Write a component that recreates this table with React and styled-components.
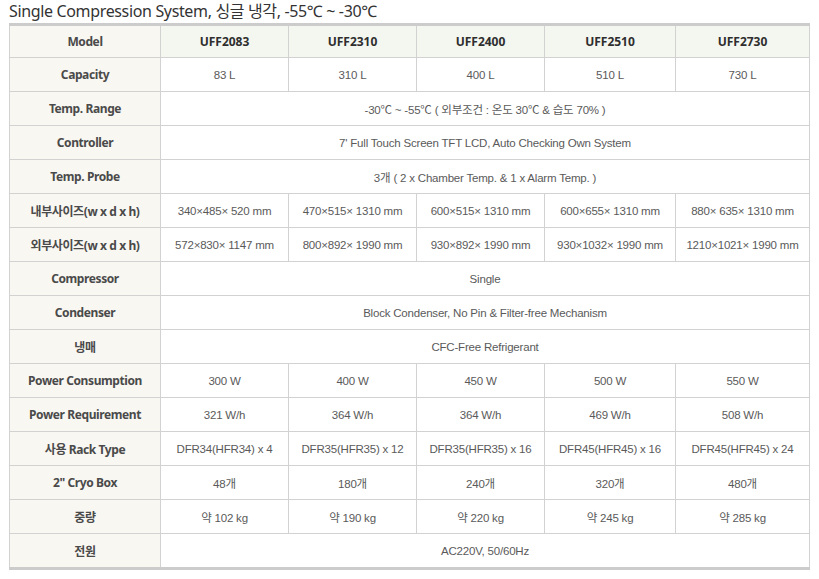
import styled, { createGlobalStyle } from "styled-components";

const GlobalStyle = createGlobalStyle`
  body {
    margin: 0;
    background: #fff;
  }
`;

const Page = styled.div`
  padding: 1px 10px 0 9px;
  width: 800px;
`;

const Title = styled.h3`
  margin: 0 0 2px 0;
  height: 20px;
  font-family: "Noto Sans", "Noto Sans CJK KR", sans-serif;
  font-size: 16px;
  line-height: 20px;
  font-weight: 400;
  color: #333;
  letter-spacing: -0.35px;
`;

const Table = styled.table`
  width: 800px;
  border-collapse: collapse;
  table-layout: fixed;
  border-top: 3px solid #cccccc;
  border-bottom: 3px solid #cccccc;
  font-family: "Liberation Sans", "Noto Sans CJK KR", sans-serif;
`;

const Col = styled.col`
  width: ${(p) => p.$w}px;
`;

const Label = styled.th`
  height: ${(p) => (p.$head ? 31 : 33)}px;
  padding: 0;
  background: #f9f7f2;
  border: 1px solid #d2d2d2;
  font-family: "Noto Sans", "Noto Sans CJK KR", sans-serif;
  font-size: 12px;
  font-weight: 700;
  color: #4a4a4a;
  text-align: center;
  letter-spacing: -0.4px;
`;

const Head = styled.th`
  padding: 0;
  background: #f4f6f0;
  border: 1px solid #d2d2d2;
  font-family: "Noto Sans", sans-serif;
  font-size: 12px;
  font-weight: 700;
  color: #2e2e2e;
  text-align: center;
`;

const Cell = styled.td`
  padding: 0;
  border: 1px solid #d2d2d2;
  font-size: 11.5px;
  color: #5a5a5a;
  text-align: center;
  letter-spacing: -0.2px;
`;

const widths = [151, 128, 128, 128, 131, 134];

const models = ["UFF2083", "UFF2310", "UFF2400", "UFF2510", "UFF2730"];

const rows = [
  ["Capacity", ["83 L", "310 L", "400 L", "510 L", "730 L"]],
  ["Temp. Range", "-30℃ ~ -55℃ ( 외부조건 : 온도 30℃ & 습도 70% )"],
  ["Controller", "7' Full Touch Screen TFT LCD, Auto Checking Own System"],
  ["Temp. Probe", "3개 ( 2 x Chamber Temp. & 1 x Alarm Temp. )"],
  ["내부사이즈(w x d x h)", ["340×485× 520 mm", "470×515× 1310 mm", "600×515× 1310 mm", "600×655× 1310 mm", "880× 635× 1310 mm"]],
  ["외부사이즈(w x d x h)", ["572×830× 1147 mm", "800×892× 1990 mm", "930×892× 1990 mm", "930×1032× 1990 mm", "1210×1021× 1990 mm"]],
  ["Compressor", "Single"],
  ["Condenser", "Block Condenser, No Pin & Filter-free Mechanism"],
  ["냉매", "CFC-Free Refrigerant"],
  ["Power Consumption", ["300 W", "400 W", "450 W", "500 W", "550 W"]],
  ["Power Requirement", ["321 W/h", "364 W/h", "364 W/h", "469 W/h", "508 W/h"]],
  ["사용 Rack Type", ["DFR34(HFR34) x 4", "DFR35(HFR35) x 12", "DFR35(HFR35) x 16", "DFR45(HFR45) x 16", "DFR45(HFR45) x 24"]],
  ["2\" Cryo Box", ["48개", "180개", "240개", "320개", "480개"]],
  ["중량", ["약 102 kg", "약 190 kg", "약 220 kg", "약 245 kg", "약 285 kg"]],
  ["전원", "AC220V, 50/60Hz"],
];

const App = () => {
  return (
    <Page>
      <GlobalStyle />
      <Title>Single Compression System, 싱글 냉각, -55℃ ~ -30℃</Title>
      <Table>
        <colgroup>
          {widths.map((w, i) => (
            <Col key={i} $w={w} />
          ))}
        </colgroup>
        <thead>
          <tr>
            <Label $head>Model</Label>
            {models.map((m) => (
              <Head key={m}>{m}</Head>
            ))}
          </tr>
        </thead>
        <tbody>
          {rows.map(([label, value]) => (
            <tr key={label}>
              <Label>{label}</Label>
              {Array.isArray(value) ? (
                value.map((v, i) => <Cell key={i}>{v}</Cell>)
              ) : (
                <Cell colSpan={5}>{value}</Cell>
              )}
            </tr>
          ))}
        </tbody>
      </Table>
    </Page>
  );
};

export default App;
